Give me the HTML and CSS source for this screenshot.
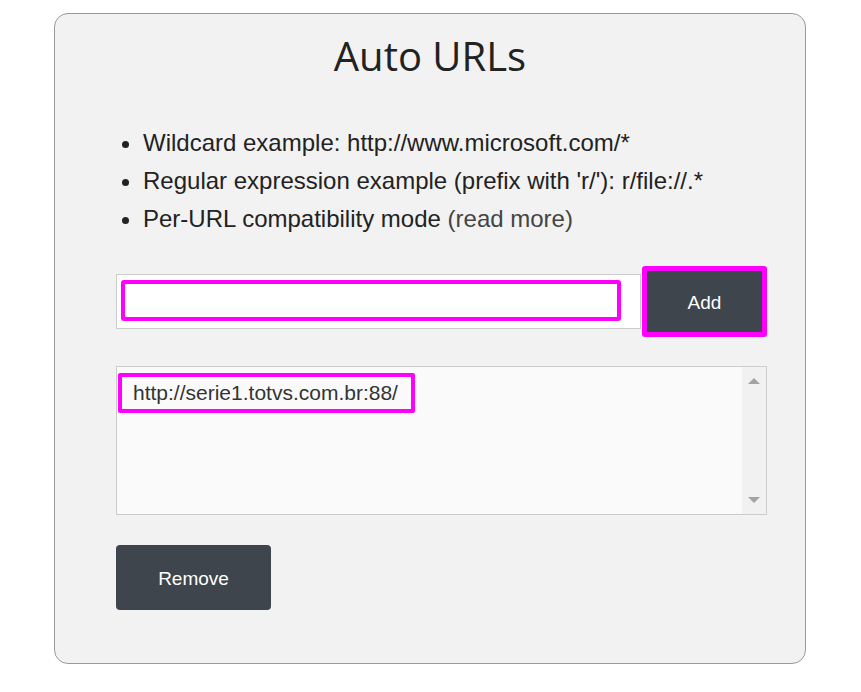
FILE: index.html
```html
<!DOCTYPE html>
<html>
<head>
<meta charset="utf-8">
<link rel="stylesheet" href="styles.css">
</head>
<body>
<div class="card">
  <h1 class="title">Auto URLs</h1>
  <ul class="tips">
    <li>Wildcard example: http://www.microsoft.com/*</li>
    <li>Regular expression example (prefix with 'r/'): r/file://.*</li>
    <li>Per-URL compatibility mode <span class="more">(read more)</span></li>
  </ul>
  <div class="add-row">
    <div class="input-wrap"><div class="input-focus"></div></div>
    <div class="btn btn-add">Add</div>
  </div>
  <div class="listbox">
    <div class="list-items">
      <div class="item-sel">http://serie1.totvs.com.br:88/</div>
    </div>
    <div class="scrollbar">
      <div class="arrow-up"></div>
      <div class="arrow-down"></div>
    </div>
  </div>
  <div class="btn btn-remove">Remove</div>
</div>
</body>
</html>
```
FILE: styles.css
```css
html, body {
  margin: 0;
  padding: 0;
  background: #ffffff;
}
.card {
  box-sizing: border-box;
  width: 752px;
  margin: 13px 0 0 54px;
  padding: 18px 38px 53px 61px;
  background: #f2f2f2;
  border: 1px solid #999999;
  border-radius: 14px;
  font-family: "Liberation Sans", Arial, sans-serif;
  color: #222222;
}
.title {
  margin: 0 -38px 0 -61px;
  text-align: center;
  font-family: "Open Sans", sans-serif;
  font-weight: 400;
  font-size: 40px;
  line-height: 48px;
  color: #222222;
}
.tips {
  margin: 44px 0 0 0;
  padding: 0 0 0 27px;
  font-size: 24px;
  line-height: 38px;
}
.more {
  color: #444444;
}
.add-row {
  margin-top: 28px;
  display: flex;
  align-items: center;
  gap: 1px;
}
.input-wrap {
  box-sizing: border-box;
  width: 525px;
  height: 55px;
  background: #ffffff;
  border: 1px solid #cccccc;
  padding: 5px 0 0 4px;
}
.input-focus {
  box-sizing: border-box;
  width: 500px;
  height: 41px;
  border: 4px solid #ff00ff;
  border-radius: 3px;
}
.btn {
  box-sizing: border-box;
  display: flex;
  align-items: center;
  justify-content: center;
  background: #3e454c;
  color: #ffffff;
  font-size: 19px;
}
.btn-add {
  width: 125px;
  height: 71px;
  border: 5px solid #ff00ff;
  border-radius: 3px;
  padding-top: 3px;
}
.listbox {
  box-sizing: border-box;
  margin-top: 29px;
  height: 149px;
  border: 1px solid #cccccc;
  background: #fafafa;
  display: flex;
}
.list-items {
  flex: 1;
  padding: 6px 0 0 1px;
}
.item-sel {
  box-sizing: border-box;
  width: 297px;
  height: 40px;
  border: 4px solid #ff00ff;
  border-radius: 2px;
  padding-left: 11px;
  font-size: 21px;
  line-height: 32px;
  color: #333333;
}
.scrollbar {
  width: 24px;
  background: #f1f1f1;
  display: flex;
  flex-direction: column;
  justify-content: space-between;
  align-items: center;
  padding: 11px 0 11px 0;
}
.arrow-up {
  width: 0;
  height: 0;
  border-left: 6px solid transparent;
  border-right: 6px solid transparent;
  border-bottom: 6px solid #a3a3a3;
}
.arrow-down {
  width: 0;
  height: 0;
  border-left: 6px solid transparent;
  border-right: 6px solid transparent;
  border-top: 6px solid #a3a3a3;
}
.btn-remove {
  margin-top: 30px;
  width: 155px;
  height: 65px;
  border-radius: 4px;
  padding-top: 2px;
}
```
